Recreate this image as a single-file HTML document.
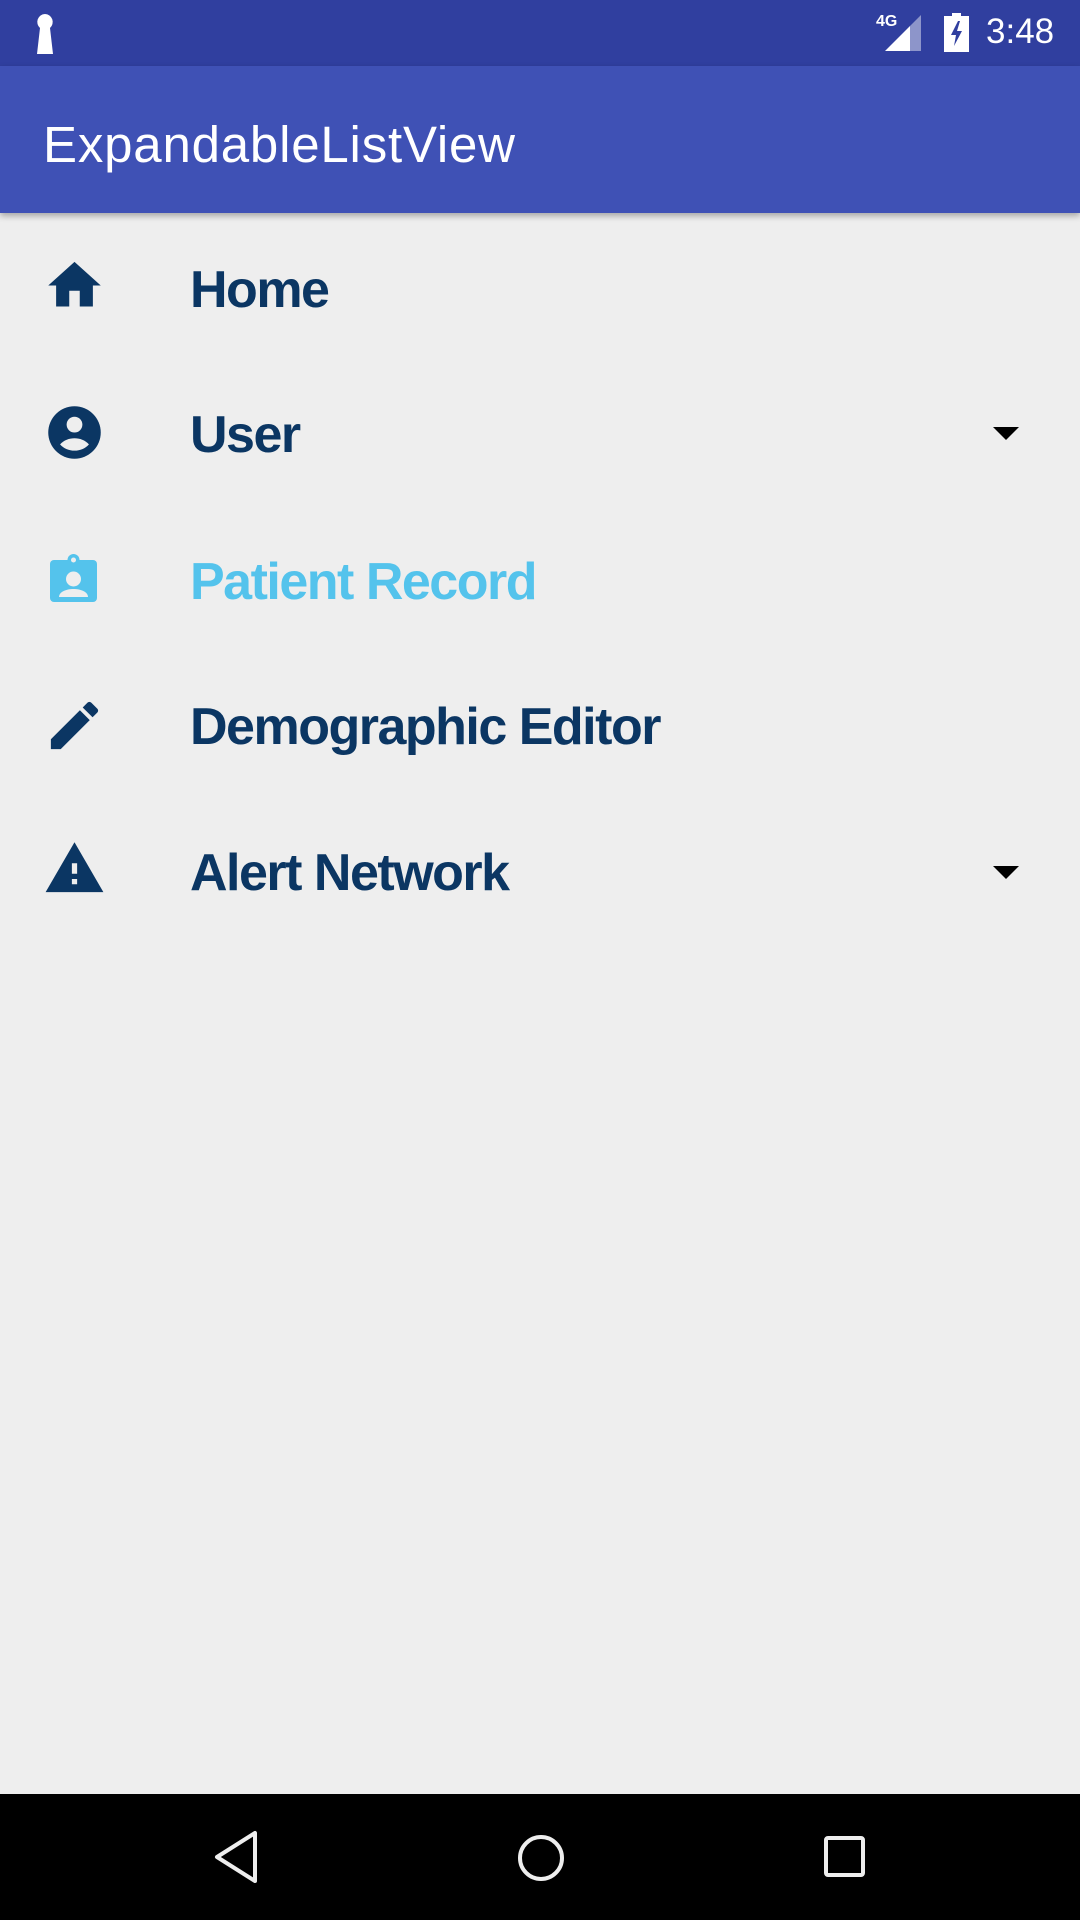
<!DOCTYPE html>
<html><head><meta charset="utf-8"><style>
body{margin:0;width:1080px;height:1920px;background:#eeeeee;position:relative;overflow:hidden;font-family:"Liberation Sans",sans-serif}
.sb{position:absolute;left:0;top:0;width:1080px;height:66px;background:#303f9f}
.tb{position:absolute;left:0;top:66px;width:1080px;height:147px;background:#3f51b5;box-shadow:0 3px 6px rgba(0,0,0,.3)}
.title{position:absolute;left:43px;top:110px;color:#fff;font-size:51px;line-height:70px;letter-spacing:0.8px}
.item{position:absolute;left:190px;font-size:52px;font-weight:bold;color:#0b3663;letter-spacing:-1.5px;line-height:60px}
svg{position:absolute}
.nav{position:absolute;left:0;top:1794px;width:1080px;height:126px;background:#000}
</style></head><body>
<div class="sb"></div>
<svg style="left:30px;top:12px" width="30" height="44" viewBox="0 0 30 44"><path d="M15 2a8 8 0 0 0-5 14L7 42h16L20 16a8 8 0 0 0-5-14z" fill="#fff"/></svg>
<div style="position:absolute;left:876px;top:13px;color:#fff;font-size:16px;font-weight:bold">4G</div>
<svg style="left:885px;top:15px" width="37" height="37" viewBox="0 0 37 37"><path d="M0 36L25 11V36Z" fill="#fff"/><path d="M25 11L36 0V36H25Z" fill="#fff" opacity=".45"/></svg>
<svg style="left:944px;top:13px" width="25" height="39" viewBox="0 0 25 39"><path d="M8 0h9v3h8v36H0V3h8z" fill="#fff"/><path d="M14 8L7 22h5l-2 11 8-15h-5l3-10z" fill="#303f9f"/></svg>
<div style="position:absolute;left:986px;top:11px;color:#fff;font-size:35px;line-height:42px">3:48</div>
<div class="tb"></div>
<div class="title">ExpandableListView</div>

<svg style="left:43px;top:254px" width="63" height="63" viewBox="0 0 24 24"><path d="M10 20v-6h4v6h5v-8h3L12 3 2 12h3v8z" fill="#0b3663"/></svg>
<div class="item" style="top:260px">Home</div>

<svg style="left:43px;top:401px" width="63" height="63" viewBox="0 0 24 24"><circle cx="12" cy="12" r="10" fill="#0b3663"/><circle cx="12" cy="9" r="3" fill="#eee"/><path d="M6.5 16.5c1.5-1.6 3.5-2.3 5.5-2.3s4 .7 5.5 2.3c-1.4 1.6-3.4 2.4-5.5 2.4s-4.1-.8-5.5-2.4z" fill="#eee"/></svg>
<div class="item" style="top:405px">User</div>
<svg style="left:993px;top:427px" width="26" height="13" viewBox="0 0 26 13"><path d="M0 0h26L13 13z" fill="#000"/></svg>

<svg style="left:50px;top:554px" width="47" height="48" viewBox="0 0 47 48"><rect x="0" y="6" width="47" height="42" rx="4" fill="#54c3ec"/><circle cx="23.5" cy="6" r="6" fill="#54c3ec"/><circle cx="23.5" cy="6" r="2.5" fill="#eee"/><circle cx="23.5" cy="25" r="7.5" fill="#eee"/><path d="M9 43c0-5 7-8 14.5-8S38 38 38 43z" fill="#eee"/></svg>
<div class="item" style="top:552px;color:#54c3ec">Patient Record</div>

<svg style="left:43px;top:694px" width="63" height="63" viewBox="0 0 24 24"><path d="M3 17.25V21h3.75L17.81 9.94l-3.75-3.75L3 17.25zM20.71 7.04a1 1 0 0 0 0-1.41l-2.34-2.34a1 1 0 0 0-1.41 0l-1.83 1.83 3.75 3.75 1.83-1.83z" fill="#0b3663"/></svg>
<div class="item" style="top:697px">Demographic Editor</div>

<svg style="left:43px;top:837px" width="63" height="63" viewBox="0 0 24 24"><path d="M1 21h22L12 2 1 21zm12-3h-2v-2h2v2zm0-4h-2v-4h2v4z" fill="#0b3663"/></svg>
<div class="item" style="top:843px">Alert Network</div>
<svg style="left:993px;top:866px" width="26" height="13" viewBox="0 0 26 13"><path d="M0 0h26L13 13z" fill="#000"/></svg>

<div class="nav"></div>
<svg style="left:210px;top:1828px" width="50" height="58" viewBox="0 0 50 58"><path d="M45 5V53L7 29Z" fill="none" stroke="#eee" stroke-width="4" stroke-linejoin="round"/></svg>
<svg style="left:515px;top:1832px" width="52" height="52" viewBox="0 0 52 52"><circle cx="26" cy="26" r="21" fill="none" stroke="#eee" stroke-width="4"/></svg>
<svg style="left:820px;top:1832px" width="50" height="50" viewBox="0 0 50 50"><rect x="6" y="6" width="37" height="37" rx="2" fill="none" stroke="#eee" stroke-width="4"/></svg>
</body></html>
